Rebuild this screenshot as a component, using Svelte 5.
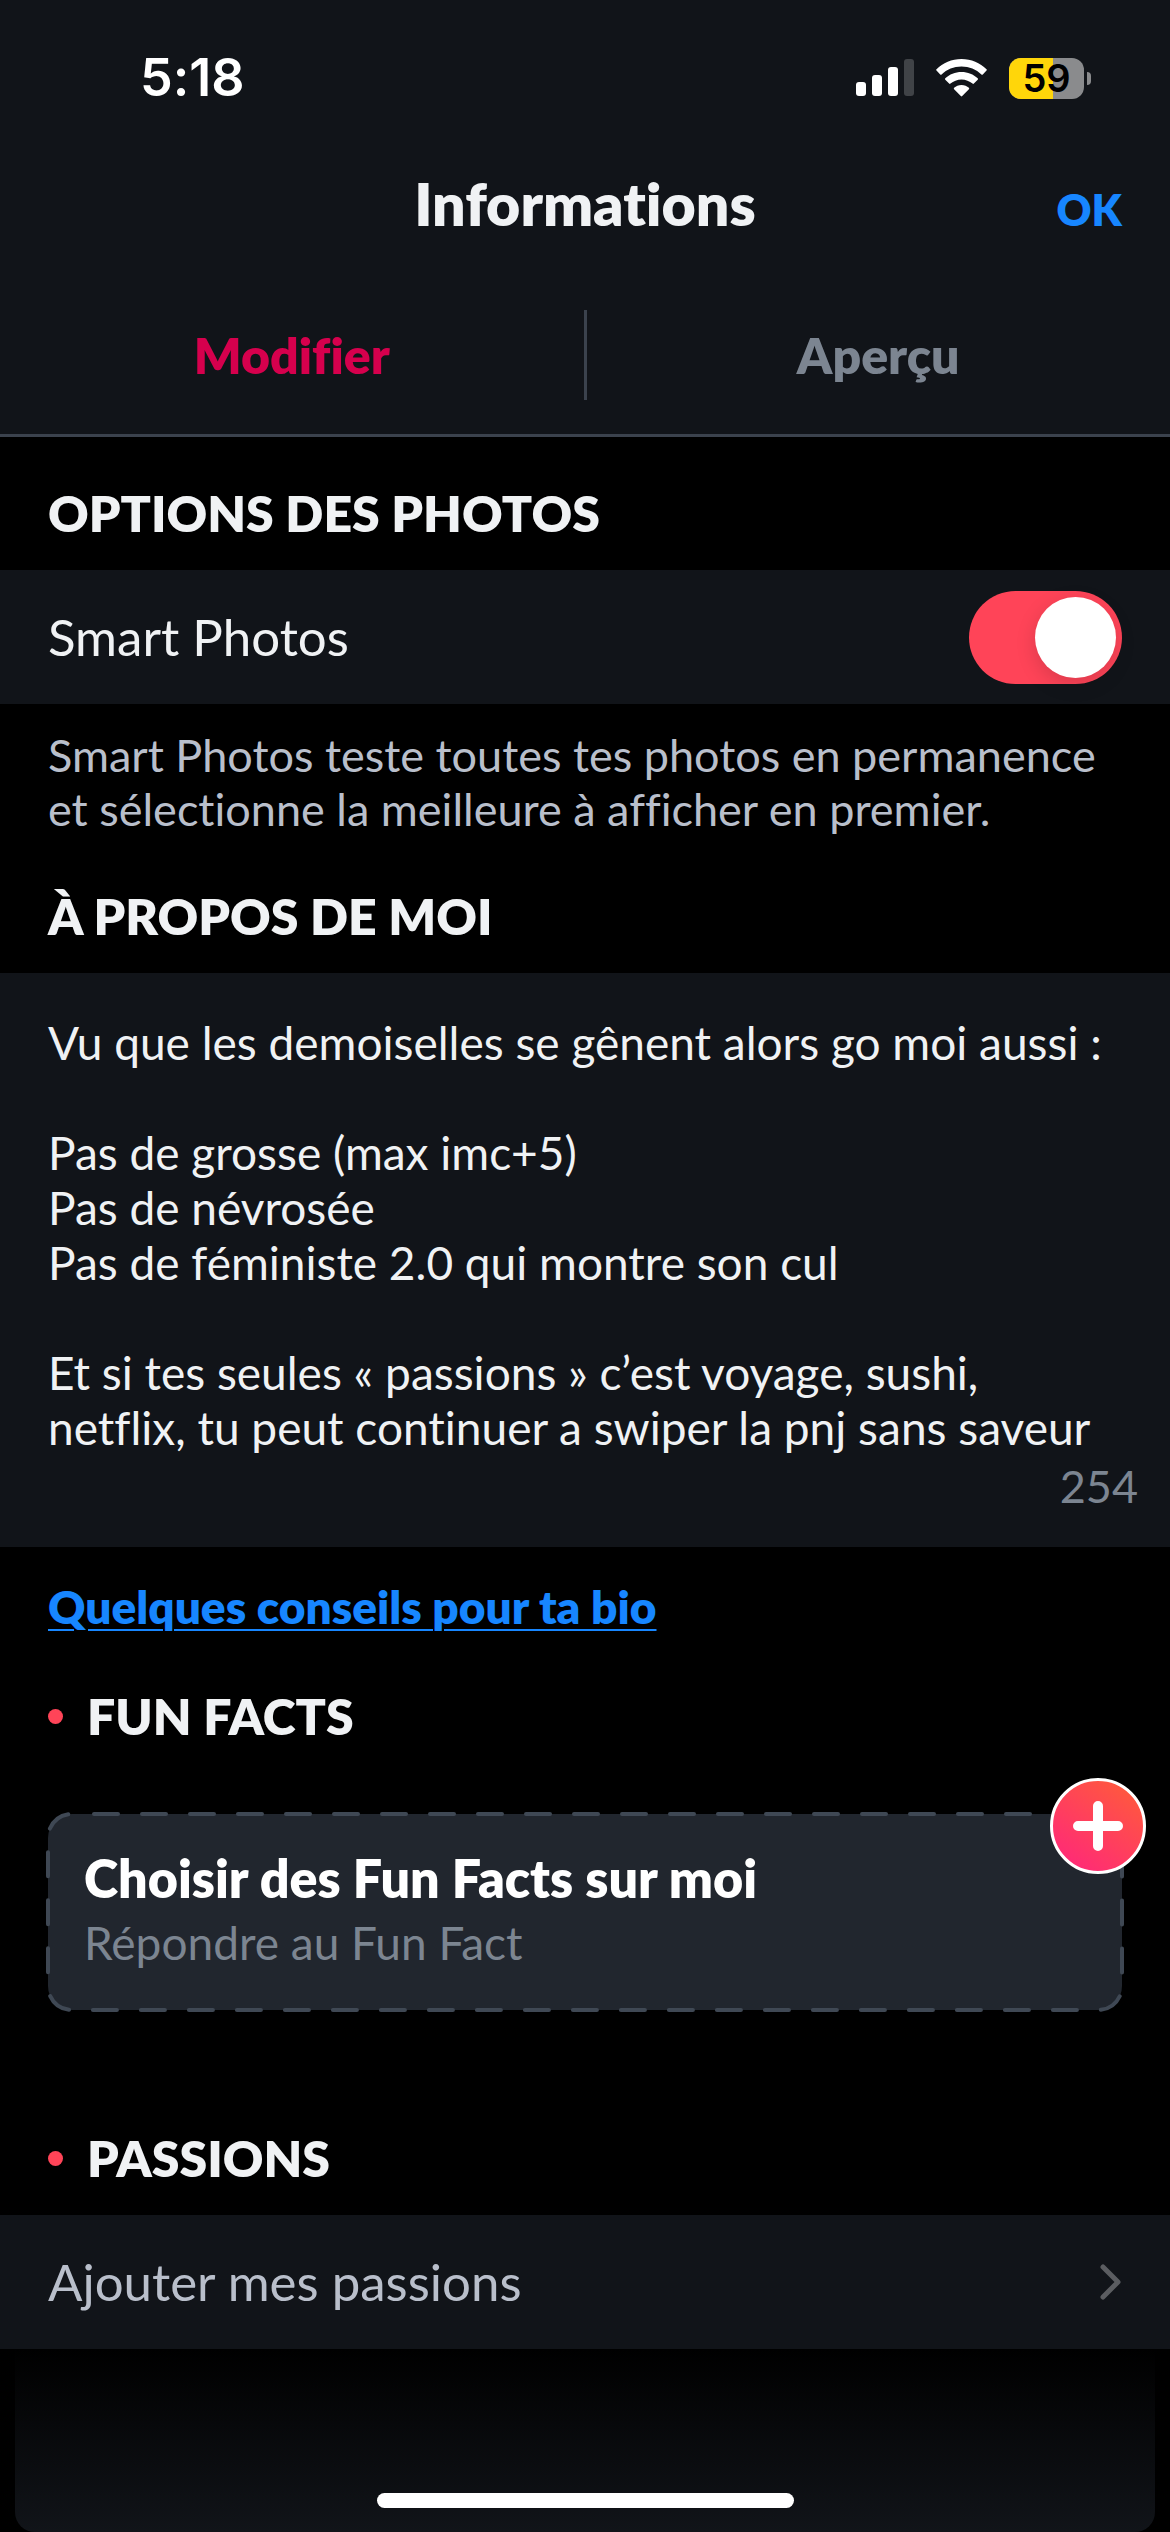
<script lang="ts">
  type Tab = 'edit' | 'preview';

  const tabs: { id: Tab; label: string }[] = [
    { id: 'edit', label: 'Modifier' },
    { id: 'preview', label: 'Aperçu' }
  ];

  const batteryLevel = 59;

  let activeTab = $state<Tab>('edit');
  let smartPhotos = $state(true);
  let bio = $state(
    [
      'Vu que les demoiselles se gênent alors go moi aussi :',
      '',
      'Pas de grosse (max imc+5)',
      'Pas de névrosée',
      'Pas de féministe 2.0 qui montre son cul',
      '',
      'Et si tes seules « passions » c’est voyage, sushi, netflix, tu peut continuer a swiper la pnj sans saveur'
    ].join('\n')
  );
  let charsLeft = $state(254);
</script>

<div class="screen">
  <header class="top">
    <div class="status-bar">
      <span class="time">5:18</span>
      <div class="status-icons">
        <svg class="signal" viewBox="0 0 58 38" aria-hidden="true">
          <rect x="0" y="23" width="10" height="14" rx="3" />
          <rect x="16" y="16" width="10" height="21" rx="3" />
          <rect x="32" y="8" width="10" height="29" rx="3" />
          <rect class="off" x="48" y="0" width="10" height="37" rx="3" />
        </svg>
        <svg class="wifi" viewBox="0 0 51 38" aria-hidden="true">
          <path d="M25.5 0C15.700 0 6.900 3.900 .5 10.200a1 1 0 0 0 0 1.400l3.700 3.900a1 1 0 0 0 1.400 0C10.800 10.600 17.800 7.600 25.500 7.600s14.700 3 19.900 7.900a1 1 0 0 0 1.400 0l3.700-3.900a1 1 0 0 0 0-1.400C44.100 3.900 35.300 0 25.500 0Z" />
          <path d="M25.500 13C19.200 13 13.500 15.400 9.300 19.300a1 1 0 0 0 0 1.400l3.800 3.900a1 1 0 0 0 1.400 0c2.900-2.600 6.800-4.200 11-4.200s8.100 1.600 11 4.200a1 1 0 0 0 1.400 0l3.800-3.900a1 1 0 0 0 0-1.400C37.500 15.400 31.800 13 25.500 13Z" />
          <path d="M25.500 26c-2.900 0-5.500 1.100-7.400 2.800a1 1 0 0 0 0 1.400l6.700 6.900a1 1 0 0 0 1.400 0l6.700-6.900a1 1 0 0 0 0-1.400C31 27.100 28.400 26 25.500 26Z" />
        </svg>
        <div class="battery">
          <div class="battery-body">
            <div class="battery-fill" style="width: {batteryLevel}%"></div>
            <span class="battery-level">{batteryLevel}</span>
          </div>
          <span class="battery-cap"></span>
        </div>
      </div>
    </div>

    <div class="nav-bar">
      <h1>Informations</h1>
      <button class="done" type="button">OK</button>
    </div>

    <div class="tabs" role="tablist">
      {#each tabs as tab}
        <button
          class="tab"
          class:active={activeTab === tab.id}
          type="button"
          role="tab"
          aria-selected={activeTab === tab.id}
          onclick={() => (activeTab = tab.id)}
        >
          {tab.label}
        </button>
      {/each}
    </div>
  </header>

  <main>
    <section class="photos">
      <h2>OPTIONS DES PHOTOS</h2>
      <div class="row">
        <label for="smart-photos">Smart Photos</label>
        <input id="smart-photos" class="switch" type="checkbox" bind:checked={smartPhotos} />
      </div>
      <p class="hint">
        Smart Photos teste toutes tes photos en permanence et sélectionne la meilleure à afficher en premier.
      </p>
    </section>

    <section class="about">
      <h2><label for="bio">À PROPOS DE MOI</label></h2>
      <div class="bio-panel">
        <textarea id="bio" rows="8" spellcheck="false" bind:value={bio}></textarea>
        <span class="counter">{charsLeft}</span>
      </div>
      <a class="tips" href="#conseils">Quelques conseils pour ta bio</a>
    </section>

    <section class="fun-facts">
      <h2 class="dotted">FUN FACTS</h2>
      <div class="card">
        <svg class="card-outline" aria-hidden="true">
          <rect width="100%" height="100%" rx="24" />
        </svg>
        <h3>Choisir des Fun Facts sur moi</h3>
        <p>Répondre au Fun Fact</p>
        <button class="add" type="button" aria-label="Ajouter un Fun Fact">
          <svg viewBox="0 0 50 50" aria-hidden="true">
            <path d="M25 5v40M5 25h40" />
          </svg>
        </button>
      </div>
    </section>

    <section class="passions">
      <h2 class="dotted">PASSIONS</h2>
      <button class="row link-row" type="button">
        <span>Ajouter mes passions</span>
        <svg class="chevron" viewBox="0 0 22 36" aria-hidden="true">
          <path d="M3 3l15 15L3 33" />
        </svg>
      </button>
    </section>
  </main>

  <footer>
    <span class="home-indicator"></span>
  </footer>
</div>

<style>
  :global(body) {
    margin: 0;
    background: #000;
  }

  .screen {
    --surface: #111419;
    --text: #f0f2f4;
    --muted: #7c8591;
    --soft: #b9bfcb;
    --red: #ff4458;
    --blue: #1786ff;
    --edge: 48px;

    display: flex;
    flex-direction: column;
    min-height: 100vh;
    background: #000;
    color: var(--text);
    font-family: Lato, 'Open Sans', sans-serif;
    font-size: 45px;
    line-height: 54px;
    font-variant-ligatures: none;
  }

  h1,
  h2,
  h3,
  p {
    margin: 0;
  }

  button {
    padding: 0;
    border: 0;
    background: none;
    color: inherit;
    font: inherit;
    font-variant-ligatures: none;
    cursor: pointer;
  }

  .top {
    background: var(--surface);
    border-bottom: 3px solid #3b424d;
  }

  .status-bar {
    display: flex;
    align-items: center;
    justify-content: space-between;
    padding: 48px 79px 0 140px;
    font-family: Inter, sans-serif;
    font-weight: 600;
    color: #fff;
  }

  .time {
    font-size: 52px;
    line-height: 60px;
  }

  .status-icons {
    display: flex;
    align-items: center;
    gap: 22px;
  }

  .signal {
    width: 58px;
    height: 38px;
    fill: #fff;
  }

  .signal .off {
    fill: #404347;
  }

  .wifi {
    width: 51px;
    height: 38px;
    fill: #fff;
  }

  .battery {
    display: flex;
    align-items: center;
    gap: 3px;
  }

  .battery-body {
    display: grid;
    align-items: center;
    width: 75px;
    height: 41px;
    border-radius: 12px;
    background: #8a8b8d;
  }

  .battery-fill,
  .battery-level {
    grid-area: 1 / 1;
  }

  .battery-fill {
    height: 41px;
    border-radius: 12px 0 0 12px;
    background: #ffd60a;
  }

  .battery-level {
    color: #000;
    font-size: 38px;
    line-height: 41px;
    text-align: center;
  }

  .battery-cap {
    width: 4px;
    height: 13px;
    border-radius: 0 4px 4px 0;
    background: #8a8b8d;
  }

  .nav-bar {
    display: grid;
    grid-template-columns: 1fr auto 1fr;
    align-items: baseline;
    padding: 60px var(--edge) 70px;
  }

  h1 {
    grid-column: 2;
    font-size: 59px;
    line-height: 72px;
    font-weight: 800;
  }

  .done {
    justify-self: end;
    color: var(--blue);
    font-size: 43px;
    font-weight: 800;
  }

  .tabs {
    display: flex;
    padding-bottom: 34px;
  }

  .tab {
    flex: 1;
    height: 90px;
    color: var(--muted);
    font-size: 50px;
    font-weight: 800;
  }

  .tab + .tab {
    border-left: 3px solid #3b424d;
  }

  .tab.active {
    color: #d6004d;
  }

  h2 {
    padding: 0 var(--edge) 27px;
    font-size: 50px;
    line-height: 60px;
    font-weight: 800;
  }

  h2.dotted {
    display: flex;
    align-items: center;
    gap: 24px;
  }

  h2.dotted::before {
    content: '';
    width: 15px;
    height: 15px;
    border-radius: 50%;
    background: var(--red);
  }

  .photos {
    padding-top: 46px;
  }

  .about {
    padding-top: 50px;
  }

  .fun-facts {
    padding-top: 52px;
  }

  .passions {
    padding-top: 118px;
  }

  .row {
    display: flex;
    align-items: center;
    justify-content: space-between;
    box-sizing: border-box;
    width: 100%;
    height: 134px;
    padding: 0 var(--edge);
    background: var(--surface);
    font-size: 51px;
  }

  .switch {
    appearance: none;
    display: flex;
    box-sizing: border-box;
    width: 153px;
    height: 93px;
    margin: 0;
    padding: 6px;
    border-radius: 47px;
    background: #3b424d;
    cursor: pointer;
  }

  .switch::before {
    content: '';
    width: 81px;
    height: 81px;
    border-radius: 50%;
    background: #fff;
    box-shadow: 0 6px 20px rgba(0, 0, 0, 0.15);
  }

  .switch:checked {
    justify-content: flex-end;
    background: var(--red);
  }

  .hint {
    padding: 24px var(--edge) 0;
    color: var(--soft);
  }

  .bio-panel {
    display: flex;
    flex-direction: column;
    padding: 42px 0 34px;
    background: var(--surface);
  }

  textarea {
    padding: 0 var(--edge);
    border: 0;
    outline: 0;
    resize: none;
    overflow: hidden;
    background: none;
    color: inherit;
    font: inherit;
    font-size: 46px;
    line-height: 55px;
    font-variant-ligatures: none;
  }

  .counter {
    padding: 4px 32px 0;
    color: var(--muted);
    text-align: right;
  }

  .tips {
    display: block;
    width: fit-content;
    margin: 33px var(--edge) 0;
    color: var(--blue);
    font-size: 46px;
    font-weight: 800;
    text-decoration-thickness: 2px;
    text-underline-offset: 5px;
  }

  .card {
    position: relative;
    margin: 41px var(--edge) 0;
    padding: 34px 36px 40px;
    border-radius: 24px;
    background: #21262e;
  }

  .card-outline {
    position: absolute;
    inset: 0;
    width: 100%;
    height: 100%;
    overflow: visible;
  }

  .card-outline rect {
    fill: none;
    stroke: #3f4854;
    stroke-width: 4;
    stroke-linecap: round;
    stroke-dasharray: 24 24;
    stroke-dashoffset: -22;
  }

  h3 {
    color: #fff;
    font-size: 52px;
    line-height: 60px;
    font-weight: 800;
  }

  .card p {
    padding-top: 8px;
    color: var(--muted);
    font-size: 46px;
  }

  .add {
    position: absolute;
    top: -36px;
    right: -24px;
    display: grid;
    place-items: center;
    box-sizing: border-box;
    width: 96px;
    height: 96px;
    border: 3px solid #fff;
    border-radius: 50%;
    background: linear-gradient(35deg, #ff2879 10%, #ff5a3c 90%) border-box;
  }

  .add svg {
    width: 50px;
    height: 50px;
    fill: none;
    stroke: #fff;
    stroke-width: 10;
    stroke-linecap: round;
  }

  .link-row {
    color: var(--soft);
  }

  .chevron {
    width: 22px;
    height: 36px;
    fill: none;
    stroke: #5b5d61;
    stroke-width: 5;
    stroke-linecap: round;
    stroke-linejoin: round;
  }

  footer {
    flex: 1;
    display: flex;
    align-items: flex-end;
    justify-content: center;
    min-height: 156px;
    margin: 0 15px;
    padding-bottom: 24px;
    border-radius: 0 0 20px 20px;
    background: linear-gradient(#000, var(--surface));
  }

  .home-indicator {
    width: 417px;
    height: 15px;
    border-radius: 8px;
    background: #fff;
  }
</style>
